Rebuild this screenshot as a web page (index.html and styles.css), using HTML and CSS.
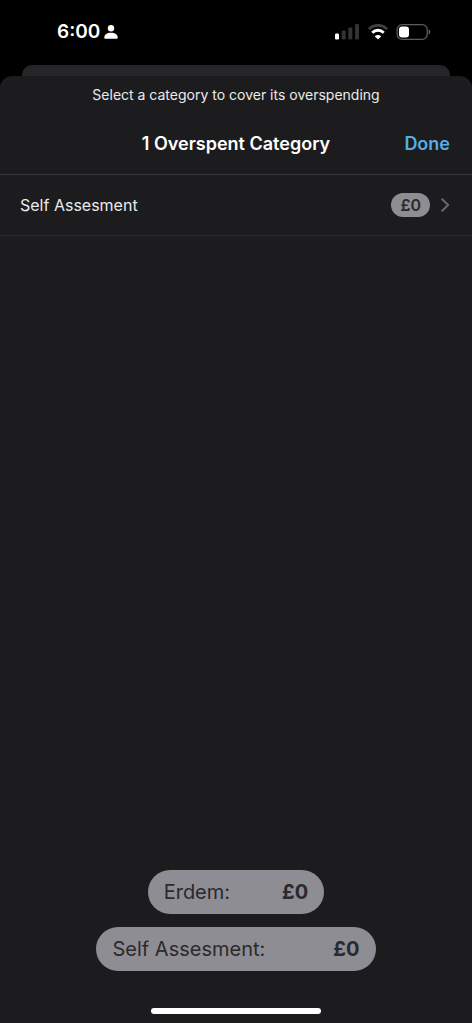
FILE: index.html
```html
<!DOCTYPE html>
<html lang="en">
<head>
  <meta charset="UTF-8" />
  <meta name="viewport" content="width=device-width, initial-scale=1.0"/>
  <title>Cover Overspending</title>
  <link rel="stylesheet" href="styles.css">
</head>
<body>

  <div class="status-bar">
    <div class="status-time">
      <span>6:00</span>
      <svg class="icon-person" width="14" height="14" viewBox="0 0 14 14" fill="#fff">
        <circle cx="7" cy="3.3" r="3.2"/>
        <path d="M.3 12.500C.3 9.700 3 7.700 7 7.700s6.700 2 6.700 4.800c0 .9-.4 1.300-1.200 1.300H1.500C.7 13.800.3 13.400.3 12.500z"/>
      </svg>
    </div>
    <div class="status-icons">
      <svg width="25" height="16" viewBox="0 0 25 16">
        <rect x="0" y="9.500" width="4" height="6" rx="1.200" fill="#fff"/>
        <rect x="6.700" y="6.500" width="4" height="9" rx="1.200" fill="#333"/>
        <rect x="13.300" y="3.500" width="4" height="12" rx="1.200" fill="#333"/>
        <rect x="20" y="0" width="4" height="15.500" rx="1.200" fill="#333"/>
      </svg>
      <svg width="20" height="16" viewBox="0 0 20 16" fill="none" stroke-width="2.800">
        <path d="M.8 5.100C6 0 14 0 19.200 5.100" stroke="#404040"/>
        <path d="M4.200 8.700c3.400-3.300 8.200-3.300 11.600 0" stroke="#fff"/>
        <path d="M10 15.500l-3.300-3.300c1.900-1.700 4.700-1.700 6.600 0z" fill="#fff"/>
      </svg>
      <svg width="35" height="16" viewBox="0 0 35 16">
        <rect x="1.200" y=".7" width="30" height="14.600" rx="4.800" fill="none" stroke="#5c5c5c" stroke-width="1.300"/>
        <rect x="3" y="2.500" width="10" height="11" rx="3" fill="#fff"/>
        <path d="M32.600 5.300c2.300.8 2.300 4.600 0 5.400z" fill="#5c5c5c"/>
      </svg>
    </div>
  </div>

  <div class="back-sheet"></div>

  <main class="sheet">
    <p class="hint">Select a category to cover its overspending</p>

    <header class="sheet-header">
      <h1>1 Overspent Category</h1>
      <button class="done-btn" type="button">Done</button>
    </header>

    <button class="category-row" type="button">
      <span class="category-name">Self Assesment</span>
      <span class="badge">£0</span>
      <svg class="chevron" width="10" height="16" viewBox="0 0 10 16" fill="none" stroke="#69696d" stroke-width="2" stroke-linecap="round" stroke-linejoin="round">
        <path d="M2.200 2.300L8.200 8l-6 5.700"/>
      </svg>
    </button>

    <div class="totals">
      <div class="pill">
        <span>Erdem:</span>
        <strong>£0</strong>
      </div>
      <div class="pill pill-wide">
        <span>Self Assesment:</span>
        <strong>£0</strong>
      </div>
    </div>

    <div class="home-indicator"></div>
  </main>

</body>
</html>
```
FILE: styles.css
```css
* {
  box-sizing: border-box;
}
body {
  font-family: Inter, 'Liberation Sans', sans-serif;
  background-color: #000;
  color: #fff;
  margin: 0;
  min-height: 100vh;
  display: flex;
  flex-direction: column;
}
button {
  font-family: inherit;
  background: none;
  border: none;
  padding: 0;
  cursor: pointer;
}
svg {
  display: block;
}

/* Status bar */
.status-bar {
  display: flex;
  justify-content: space-between;
  align-items: center;
  height: 65px;
  padding: 0 41px 2px 57px;
}
.status-time {
  display: flex;
  align-items: center;
  gap: 4px;
  font-size: 19px;
  font-weight: 600;
  line-height: 24px;
}
.status-icons {
  display: flex;
  align-items: center;
  gap: 8px;
}

/* Sheets */
.back-sheet {
  height: 11px;
  margin: 0 22px;
  background-color: #262628;
  border-radius: 10px 10px 0 0;
}
.sheet {
  flex: 1;
  display: flex;
  flex-direction: column;
  background-color: #1c1c1e;
  border-radius: 12px 12px 0 0;
}
.hint {
  margin: 0;
  padding-top: 9px;
  text-align: center;
  font-size: 14px;
  line-height: 20px;
  color: #ebebeb;
}
.sheet-header {
  display: grid;
  grid-template-columns: 1fr auto 1fr;
  align-items: center;
  height: 70px;
  padding: 8px 22px 0;
  border-bottom: 1px solid #39393b;
}
.sheet-header h1 {
  grid-column: 2;
  margin: 0;
  font-size: 18px;
  font-weight: 600;
  line-height: 24px;
}
.done-btn {
  justify-self: end;
  font-size: 18px;
  font-weight: 600;
  line-height: 24px;
  color: #55aee8;
}

/* Category list */
.category-row {
  display: flex;
  align-items: center;
  width: 100%;
  height: 61px;
  padding: 0 22px 0 20px;
  border-bottom: 1px solid #29292b;
  text-align: left;
  color: #ebebeb;
}
.category-name {
  flex: 1;
  font-size: 16px;
  line-height: 24px;
}
.badge {
  padding: 0 9px;
  border-radius: 12px;
  background-color: #8e8d93;
  color: #2a2a2c;
  font-size: 16px;
  font-weight: 600;
  line-height: 24px;
}
.chevron {
  margin-left: 10px;
}

/* Bottom totals */
.totals {
  display: flex;
  flex-direction: column;
  align-items: center;
  gap: 13px;
  margin-top: auto;
}
.pill {
  display: flex;
  justify-content: space-between;
  gap: 52px;
  padding: 8px 16px;
  border-radius: 22px;
  background-color: #8e8d93;
  color: #2a2a2c;
  font-size: 20px;
  line-height: 28px;
}
.pill-wide {
  gap: 68px;
}
.pill strong {
  font-weight: 700;
}
.home-indicator {
  width: 36%;
  height: 6px;
  margin: 37px auto 9px;
  border-radius: 3px;
  background-color: #fff;
}
```
